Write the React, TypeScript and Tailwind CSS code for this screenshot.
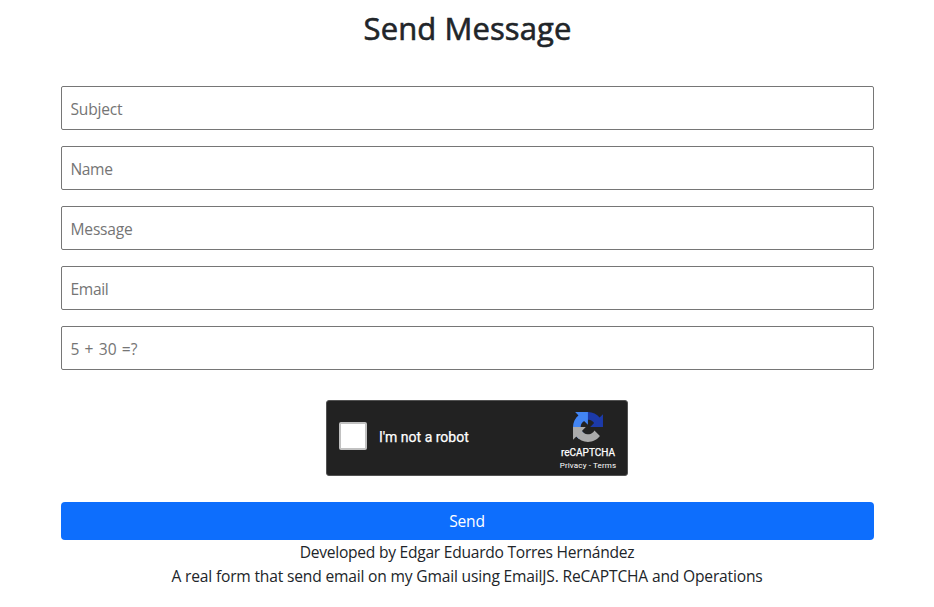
const fields = [
  { label: "Subject", spacing: "tracking-[-0.2px]" },
  { label: "Name", spacing: "tracking-[-0.4px]" },
  { label: "Message", spacing: "tracking-[-0.2px]" },
  { label: "Email", spacing: "tracking-[-0.35px]" },
  { label: "5 + 30 =?", spacing: "tracking-[0.1px] [word-spacing:0.9px]" },
];

function RecaptchaLogo() {
  return (
    <svg viewBox="0 0 64 64" className="size-[30px]" aria-hidden="true">
      <path
        fill="#1c3aa9"
        d="M64 31.955l-.033-1.37V4.687l-7.16 7.16C50.948 4.674 42.033.093 32.05.093c-10.4 0-19.622 4.96-25.458 12.64l11.736 11.86a15.55 15.55 0 0 1 4.754-5.334c2.05-1.6 4.952-2.906 8.968-2.906.485 0 .86.057 1.135.163 4.976.393 9.288 3.14 11.828 7.124l-8.307 8.307L64 31.953"
      />
      <path
        fill="#4285f4"
        d="M31.862.094l-1.37.033H4.594l7.16 7.16C4.58 13.147 0 22.06 0 32.046c0 10.4 4.96 19.622 12.64 25.458L24.5 45.768a15.55 15.55 0 0 1-5.334-4.754c-1.6-2.05-2.906-4.952-2.906-8.968 0-.485.057-.86.163-1.135.393-4.976 3.14-9.288 7.124-11.828l8.307 8.307L31.86.095"
      />
      <path
        fill="#ababab"
        d="M.001 32.045l.033 1.37v25.898l7.16-7.16c5.86 7.173 14.774 11.754 24.76 11.754 10.4 0 19.622-4.96 25.458-12.64l-11.736-11.86a15.55 15.55 0 0 1-4.754 5.334c-2.05 1.6-4.952 2.906-8.968 2.906-.485 0-.86-.057-1.135-.163-4.976-.393-9.288-3.14-11.828-7.124l8.307-8.307c-10.522.04-22.4.066-27.295-.005"
      />
    </svg>
  );
}

function Recaptcha() {
  return (
    <div className="ml-[265px] mt-[30px] flex h-[76px] w-[302px] rounded-[3px] border border-[#525252] bg-[#222222] font-[Roboto,sans-serif] text-white">
      <div className="flex flex-1 items-center pb-1 pl-3">
        <button
          type="button"
          aria-label="I'm not a robot"
          className="size-7 rounded-[2px] border-2 border-[#c1c1c1] bg-white"
        />
        <span className="ml-3 pt-[2px] text-[14px] leading-[17px] [-webkit-text-stroke:0.25px_white]">
          I'm not a robot
        </span>
      </div>
      <div className="flex w-[78px] flex-col items-center pt-[11px]">
        <RecaptchaLogo />
        <div className="mt-[6px] text-[10px] leading-[10px] [-webkit-text-stroke:0.25px_white]">
          reCAPTCHA
        </div>
        <div className="mt-[3px] whitespace-nowrap text-[8px] leading-[10px] tracking-[0.15px]">
          Privacy - Terms
        </div>
      </div>
    </div>
  );
}

export default function App() {
  return (
    <main className="min-h-[607px] bg-white pl-[61px] pr-[60px] font-['Open_Sans','Noto_Sans',sans-serif] text-[#212529]">
      <h1 className="pt-[9px] text-center text-[31px] font-normal leading-[38px] tracking-[0.1px] [-webkit-text-stroke:0.6px_#212529]">
        Send Message
      </h1>
      <form className="mt-[39px] flex flex-col">
        <div className="flex flex-col gap-4">
          {fields.map(({ label, spacing }) => (
            <input
              key={label}
              placeholder={label}
              className={`h-11 w-full rounded-[2px] border border-[#767676] px-[8.5px] pt-[2px] text-[15.6px] placeholder:text-[#757575] ${spacing}`}
            />
          ))}
        </div>
        <Recaptcha />
        <button
          type="button"
          className="mt-[26px] h-[38px] rounded-[4px] bg-[#0d6efd] pr-px pt-[2px] text-[15.6px] tracking-[-0.2px] text-white"
        >
          Send
        </button>
      </form>
      <footer className="pr-px text-center text-[15.6px] leading-6">
        <p className="tracking-[-0.26px]">Developed by Edgar Eduardo Torres Hernández</p>
        <p className="tracking-[-0.18px]">
          A real form that send email on my Gmail using EmailJS. ReCAPTCHA and Operations
        </p>
      </footer>
    </main>
  );
}
